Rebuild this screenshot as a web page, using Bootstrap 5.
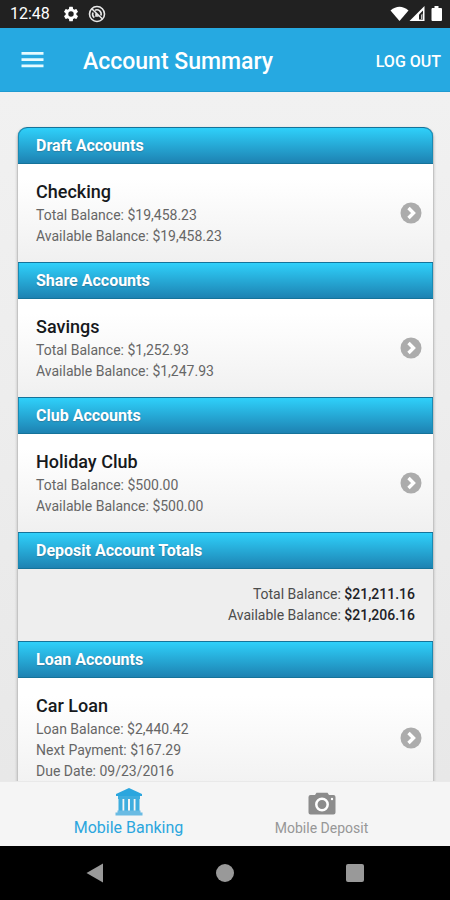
<!DOCTYPE html>
<html lang="en">
<head>
<meta charset="utf-8">
<meta name="viewport" content="width=device-width, initial-scale=1">
<title>Account Summary</title>
<link href="https://cdn.jsdelivr.net/npm/bootstrap@5.3.0/dist/css/bootstrap.min.css" rel="stylesheet">
<style>
  body { font-family: Roboto, "Liberation Sans", sans-serif; background: #eee; }
  svg { display: block; flex: none; }
  .status-bar { height: 28px; padding: 0 7px 0 10px; background: #212121; font-size: 16px; line-height: 28px; }
  .status-icons { margin-left: 12px; gap: 8px; }
  .app-bar { height: 64px; padding: 0 9px 0 21px; background: #26a9e1; border-bottom: 1px solid #1f9bd1; }
  .app-bar h1 { font-size: 23px; line-height: 30px; font-weight: 500; margin-left: 39px; padding-top: 4px; }
  .app-bar a { font-size: 16px; font-weight: 500; padding-top: 4px; }
  .content-area { min-height: 0; padding: 35px 16px 0 17px; background: linear-gradient(#f1f1f1, #e8e8e8); }
  .accounts { border: 1px solid #c4c4c4; border-top: 0; border-radius: 10px 10px 0 0; box-shadow: 0 1px 3px rgba(0, 0, 0, .2); }
  .group-title { height: 37px; padding: 0 18px; font-size: 16px; line-height: 35px; font-weight: 700; color: #fff;
    background: linear-gradient(#2fd0fa, #1d82b2); border: solid #15739a; border-width: 1px 0; box-shadow: inset 1px 0 #1b8ab3, inset -1px 0 #1b8ab3; text-shadow: 0 1px 1px #2f7fa3; }
  .accounts li:first-child .group-title { border-radius: 9px 9px 0 0; }
  .account { padding: 15px 11px 15px 18px; background: linear-gradient(#fff 15%, #f0f0f0); color: #666; font-size: 14px; line-height: 21px; }
  .account h3 { font-size: 18px; line-height: 26px; font-weight: 500; color: #16191c; }
  .totals { padding: 15px 18px; background: #eee; color: #4c4c4c; font-size: 14px; line-height: 21px; }
  .totals strong { font-weight: 500; color: #1c2126; }
  .tab-bar { height: 65px; padding: 0 32px; background: #f5f5f5; border-top: 1px solid #e9e9e9; }
  .tab-bar a { font-size: 14px; line-height: 22px; color: #979797; padding-top: 5px; }
  .tab-bar a.active { font-size: 16px; color: #2ba6de; }
  .system-bar { height: 54px; background: #000; padding: 0 30px; }
</style>
</head>
<body>
<svg width="0" height="0" class="position-absolute" aria-hidden="true">
  <symbol id="chevron" viewBox="0 0 22 22"><circle cx="11" cy="11" r="10.5" fill="#acacac"/><path d="M8.5 6l5 5-5 5" fill="none" stroke="#fff" stroke-width="3.4"/></symbol>
</svg>
<div class="vh-100 d-flex flex-column overflow-hidden">
  <div class="status-bar d-flex align-items-center text-white flex-shrink-0">
    <span>12:48</span>
    <div class="status-icons d-flex">
      <svg width="18" height="18" viewBox="0 0 24 24" fill="#fff"><path d="M19.14 12.94c.04-.3.06-.61.06-.94 0-.32-.02-.64-.07-.94l2.03-1.58a.49.49 0 0 0 .12-.61l-1.92-3.32a.49.49 0 0 0-.59-.22l-2.39.96a7 7 0 0 0-1.62-.94l-.36-2.54a.48.48 0 0 0-.48-.41h-3.84a.47.47 0 0 0-.47.41l-.36 2.54c-.59.24-1.13.57-1.62.94l-2.39-.96a.48.48 0 0 0-.59.22L2.74 8.87a.48.48 0 0 0 .12.61l2.03 1.58a7 7 0 0 0 0 1.88l-2.03 1.58a.49.49 0 0 0-.12.61l1.92 3.32c.12.22.37.29.59.22l2.39-.96c.5.38 1.03.7 1.62.94l.36 2.54c.05.24.24.41.48.41h3.84c.24 0 .44-.17.47-.41l.36-2.54a7 7 0 0 0 1.62-.94l2.39.96c.22.08.47 0 .59-.22l1.92-3.32a.47.47 0 0 0-.12-.61zM12 15.6a3.6 3.6 0 1 1 0-7.2 3.6 3.6 0 0 1 0 7.2z"/></svg>
      <svg width="18" height="18" viewBox="0 0 18 18" fill="none" stroke="#e8e8e8" stroke-width="1.6"><circle cx="9" cy="9" r="7.5"/><path d="M4 4l10.500 10M6.300 12.600A4.300 4.300 0 0 1 5 7.500M7 5.200A4.300 4.300 0 0 1 12.900 10.500M8 8.500v2.500h2.500"/></svg>
    </div>
    <svg class="ms-auto" width="53" height="18" viewBox="0 0 53 18" fill="#fff"><path d="M.5 5.5Q9.500-2 18.500 5.500L9.500 16z"/><path d="M19.500 16L34.500 1v15z"/><path d="M29 14.500V9.500l4-4v9z" fill="#212121"/><path d="M31 14V10l1.500-1.500V14z" fill="#bbb"/><path d="M42 3h2.500V1h4v2H51a1 1 0 0 1 1 1v11a1 1 0 0 1-1 1h-8.500a1 1 0 0 1-1-1V4z"/></svg>
  </div>
  <header class="app-bar d-flex align-items-center text-white flex-shrink-0">
    <button type="button" class="btn p-0 border-0" aria-label="Menu"><svg width="23" height="18" viewBox="0 0 23 18" fill="#e6fbff"><path d="M.5 1h22v2.700H.5zM.5 7.300h22V10H.5zM.5 13.600h22v2.700H.5z"/></svg></button>
    <h1 class="mb-0">Account Summary</h1>
    <a href="#" class="ms-auto text-white text-decoration-none">LOG OUT</a>
  </header>
  <main class="content-area flex-grow-1 overflow-hidden">
    <ul class="accounts list-unstyled mb-0">
      <li><h2 class="group-title mb-0">Draft Accounts</h2>
        <a href="#" class="account d-flex align-items-center justify-content-between text-decoration-none">
          <div><h3 class="mb-0">Checking</h3><div>Total Balance: $19,458.23</div><div>Available Balance: $19,458.23</div></div>
          <svg width="22" height="22" aria-hidden="true"><use href="#chevron"/></svg></a></li>
      <li><h2 class="group-title mb-0">Share Accounts</h2>
        <a href="#" class="account d-flex align-items-center justify-content-between text-decoration-none">
          <div><h3 class="mb-0">Savings</h3><div>Total Balance: $1,252.93</div><div>Available Balance: $1,247.93</div></div>
          <svg width="22" height="22" aria-hidden="true"><use href="#chevron"/></svg></a></li>
      <li><h2 class="group-title mb-0">Club Accounts</h2>
        <a href="#" class="account d-flex align-items-center justify-content-between text-decoration-none">
          <div><h3 class="mb-0">Holiday Club</h3><div>Total Balance: $500.00</div><div>Available Balance: $500.00</div></div>
          <svg width="22" height="22" aria-hidden="true"><use href="#chevron"/></svg></a></li>
      <li><h2 class="group-title mb-0">Deposit Account Totals</h2>
        <div class="totals text-end"><div>Total Balance: <strong>$21,211.16</strong></div><div>Available Balance: <strong>$21,206.16</strong></div></div></li>
      <li><h2 class="group-title mb-0">Loan Accounts</h2>
        <a href="#" class="account d-flex align-items-center justify-content-between text-decoration-none">
          <div><h3 class="mb-0">Car Loan</h3><div>Loan Balance: $2,440.42</div><div>Next Payment: $167.29</div><div>Due Date: 09/23/2016</div></div>
          <svg width="22" height="22" aria-hidden="true"><use href="#chevron"/></svg></a></li>
    </ul>
  </main>
  <nav class="tab-bar flex-shrink-0"><div class="row g-0">
    <a href="#" class="active col d-flex flex-column align-items-center text-decoration-none">
      <svg width="28" height="30" viewBox="0 0 28 30" fill="#2ba6de"><path d="M14 1L27 7v2H1V7z"/><path d="M3 9h22v3H3zM3.500 12h4v12h-4zM9.300 12H13v12H9.300zM15 12h3.700v12H15zM20.500 12h4v12h-4z" fill="#3fadde"/><path d="M2.500 23.500h23v2h2V28.500H.5V25.500h2z" fill="#6abbe3"/></svg>Mobile Banking</a>
    <a href="#" class="col d-flex flex-column align-items-center text-decoration-none">
      <svg width="28" height="30" viewBox="0 0 28 30"><path d="M2.500 8H7l1.500-2.200h11L21 8h4.500A2 2 0 0 1 27.500 10v15.500a2 2 0 0 1-2 2h-23a2 2 0 0 1-2-2V10a2 2 0 0 1 2-2z" fill="#8c8c8c"/><circle cx="14" cy="17.500" r="5.700" fill="#8c8c8c" stroke="#fff" stroke-width="2.500"/><circle cx="24" cy="12" r="1.200" fill="#fff"/></svg>Mobile Deposit</a>
  </div></nav>
  <div class="system-bar d-flex justify-content-around align-items-center flex-shrink-0">
    <button type="button" class="btn p-0 border-0" aria-label="Back"><svg width="20" height="20" viewBox="0 0 20 20" fill="#999"><path d="M1.500 10L18 .5v19z"/></svg></button>
    <button type="button" class="btn p-0 border-0" aria-label="Home"><svg width="20" height="20" viewBox="0 0 20 20" fill="#999"><circle cx="10" cy="10" r="9"/></svg></button>
    <button type="button" class="btn p-0 border-0" aria-label="Recent apps"><svg width="20" height="20" viewBox="0 0 20 20" fill="#999"><rect x="1" y="1" width="18" height="18" rx="2"/></svg></button>
  </div>
</div>
<script src="https://cdn.jsdelivr.net/npm/bootstrap@5.3.0/dist/js/bootstrap.bundle.min.js"></script>
</body>
</html>
